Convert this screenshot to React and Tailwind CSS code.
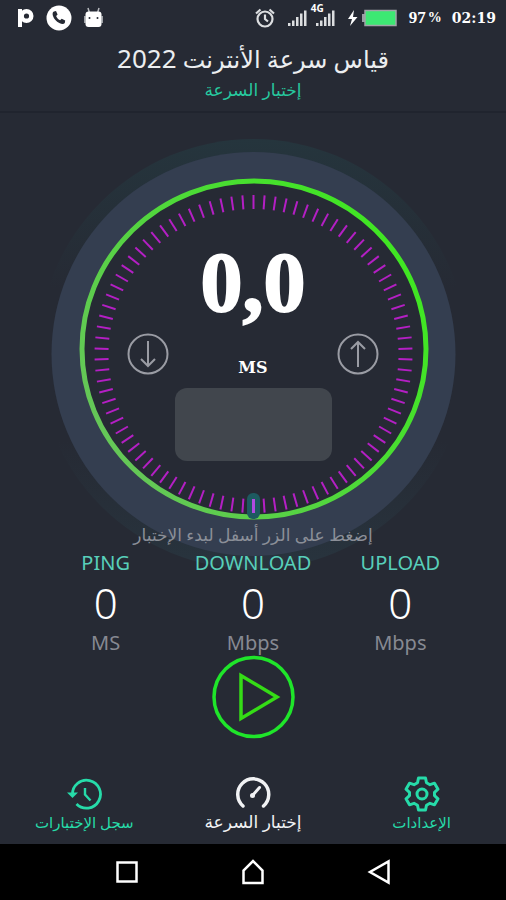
import React from "react";

const TICKS = Array.from({ length: 90 }, (_, i) => i * 4);

const STATS = [
  { label: "PING", value: "0", unit: "MS" },
  { label: "DOWNLOAD", value: "0", unit: "Mbps" },
  { label: "UPLOAD", value: "0", unit: "Mbps" },
];

function StatusBar() {
  return (
    <div className="flex h-9 items-center justify-between px-2.5 pl-4 text-white">
      <div className="flex items-center gap-3">
        <svg width="18" height="22" viewBox="0 0 18 22" aria-hidden="true">
          <path d="M2 2h4v18H2z" fill="white" />
          <circle cx="10.500" cy="9" r="4.800" fill="none" stroke="white" strokeWidth="4.400" />
        </svg>
        <svg width="26" height="26" viewBox="0 0 26 26" aria-hidden="true">
          <circle cx="13" cy="13" r="12.500" fill="white" />
          <path
            d="M8 6.500l2-.5 1.600 3.500-1.500 1.600c.8 2 2 3.300 4 4.200l1.600-1.500 3.500 1.700-.4 2.500c-1 1.300-3 1.300-5.500 0-3-1.500-5.300-4-6.300-7-.7-2.200-.4-4 1-4.500z"
            fill="#262a34"
          />
        </svg>
        <svg width="19" height="22" viewBox="0 0 19 22" aria-hidden="true">
          <path d="M4 1l1.500 5M15 1l-1.500 5" stroke="#b9bcc0" strokeWidth="1.500" />
          <rect x="1.500" y="4.500" width="16" height="15.500" rx="3" fill="white" />
          <path d="M1 9v7M18 9v7" stroke="#c8cacd" strokeWidth="1.500" />
          <circle cx="5.500" cy="11" r="1" fill="#262a34" />
          <circle cx="13.500" cy="11" r="1" fill="#262a34" />
        </svg>
      </div>
      <div className="flex items-center">
        <svg className="mr-3" width="20" height="20" viewBox="0 0 20 20" fill="none" stroke="#dcdee0" strokeWidth="2.200" aria-hidden="true">
          <circle cx="10" cy="11" r="7.500" />
          <path d="M10 6.500V11l3 2.500M1 5.500l4.500-4M19 5.500l-4.500-4" />
        </svg>
        <svg width="20" height="20" viewBox="0 0 20 20" fill="#dcdee0" aria-hidden="true">
          <path d="M1 15h2.500v3H1zM5 12.500h2.500V18H5zM9 9h2.500v9H9zM13 5.500h2.500V18H13zM17 2.500h2.500v15.500H17z" />
        </svg>
        <div className="relative ml-1.5 mr-3">
          <svg width="22" height="20" viewBox="0 0 22 20" fill="#dcdee0" aria-hidden="true">
            <path d="M3 15h2.500v3H3zM7 12.500h2.500V18H7zM11 9h2.500v9H11zM15 5.500h2.500V18H15zM19 2.500h2.500v15.500H19z" />
          </svg>
          <span className="absolute -left-0.5 -top-1.5 text-[10px] font-bold leading-3">4G</span>
        </div>
        <svg className="mr-3" width="50" height="20" viewBox="0 0 50 20" aria-hidden="true">
          <path d="M7 2L1 11h4l-2 7 7.500-9H6z" fill="white" />
          <path d="M15 6h3v8h-3z" fill="#9b9fa4" />
          <rect x="18" y="2.500" width="31" height="15" fill="#3de873" stroke="#a0a4a8" strokeWidth="1.500" />
        </svg>
        <span className="mr-2.5 flex gap-0.5 font-['Liberation_Serif',serif] text-[17px] font-bold">
          <span>97</span>
          <span className="text-[14px] leading-[26px]">%</span>
        </span>
        <span className="font-['DejaVu_Serif',serif] text-[14px] font-bold">02:19</span>
      </div>
    </div>
  );
}

function DialArt() {
  return (
    <svg
      className="absolute left-1/2 top-6 -translate-x-1/2"
      width="434"
      height="434"
      viewBox="0 0 434 434"
      fill="none"
      aria-hidden="true"
    >
      <defs>
        <linearGradient id="halo" x1="0" y1="0" x2="0" y2="1">
          <stop offset="0" stopColor="#25353d" />
          <stop offset="0.350" stopColor="#262a34" />
          <stop offset="0.700" stopColor="#262a34" />
          <stop offset="1" stopColor="#28343e" />
        </linearGradient>
        <linearGradient id="ring" x1="1" y1="0.200" x2="0" y2="0.800">
          <stop offset="0" stopColor="#3ee81f" />
          <stop offset="0.400" stopColor="#4bdc34" />
          <stop offset="1" stopColor="#68c45c" />
        </linearGradient>
      </defs>
      <circle cx="217" cy="217" r="215" fill="url(#halo)" />
      <circle cx="217.500" cy="217" r="202" fill="#343e50" />
      <ellipse cx="218" cy="212" rx="172" ry="168" fill="#262a34" stroke="url(#ring)" strokeWidth="5" />
      <rect x="211" y="356" width="13" height="26" rx="6" fill="#1d5a60" />
      <g stroke="#b41fc4" strokeWidth="2">
        {TICKS.map((angle) => (
          <path key={angle} d="M217.500 58v14" transform={`rotate(${angle} 217.500 217)`} />
        ))}
      </g>
      <path d="M217.500 362v14" stroke="#b04be0" strokeWidth="3" />
    </svg>
  );
}

function ArrowBadge({ up }) {
  return (
    <svg width="42" height="42" viewBox="0 0 42 42" fill="none" stroke="#9a9ca4" strokeWidth="2" aria-hidden="true">
      <circle cx="21" cy="21" r="19.500" />
      <path d={up ? "M21 34V9M14 16l7-7 7 7" : "M21 8v25M14 26l7 7 7-7"} />
    </svg>
  );
}

function Dial() {
  return (
    <div className="relative flex flex-col items-center">
      <p className="mt-[124px] font-['Liberation_Serif',serif] text-[84px] font-bold leading-[92px] text-white [-webkit-text-stroke:2px_white]">
        0,0
      </p>
      <div className="mt-1 flex w-[252px] items-start justify-between">
        <ArrowBadge />
        <span className="mt-[23px] font-['DejaVu_Serif',serif] text-[16px] font-bold leading-6 text-white">MS</span>
        <ArrowBadge up />
      </div>
      <div className="mt-2 h-[73px] w-[157px] rounded-xl bg-[#41464d]" />
      <p dir="rtl" className="mt-[60px] text-[17px] leading-7 text-[#8b8f98]">
        إضغط على الزر أسفل لبدء الإختبار
      </p>
    </div>
  );
}

function Stats() {
  return (
    <dl className="relative grid grid-cols-3 px-8 text-center">
      {STATS.map((s) => (
        <div key={s.label} className="flex flex-col items-center">
          <dt className="text-[20px] leading-7 text-[#58cfba]">{s.label}</dt>
          <dd className="text-[42px] font-light leading-[52px] text-white">{s.value}</dd>
          <dd className="text-[20px] leading-7 text-[#868992]">{s.unit}</dd>
        </div>
      ))}
    </dl>
  );
}

function HistoryIcon() {
  return (
    <svg width="36" height="36" viewBox="0 0 36 36" fill="none" stroke="currentColor" strokeWidth="2.800" aria-hidden="true">
      <path d="M6.500 19A14 14 0 1 1 10.500 28" />
      <path d="M1 16.500h11L6.500 22z" fill="currentColor" stroke="none" />
      <path d="M19 12v6.500l5.500 6" strokeWidth="2.400" />
    </svg>
  );
}

function GaugeIcon() {
  return (
    <svg width="36" height="36" viewBox="0 0 36 36" fill="none" stroke="currentColor" strokeWidth="3.500" strokeLinecap="round" aria-hidden="true">
      <path d="M8 30A15.500 15.500 0 1 1 28.500 30" />
      <path d="M17.500 19.500l7-8" strokeWidth="3" />
      <circle cx="17.500" cy="19.500" r="2.500" fill="currentColor" stroke="none" />
    </svg>
  );
}

function GearIcon() {
  return (
    <svg width="36" height="36" viewBox="0 0 36 36" fill="none" stroke="currentColor" strokeWidth="3" strokeLinejoin="round" aria-hidden="true">
      <path d="M14.500 2h7l1 4.700 3.500 2 4.500-1.500 3.500 6-3.500 3.200v3.200l3.500 3.200-3.500 6-4.500-1.500-3.500 2-1 4.700h-7l-1-4.700-3.500-2-4.500 1.500-3.500-6 3.500-3.200v-3.200L2 13.200l3.500-6L10 8.700l3.500-2z" />
      <circle cx="18" cy="18" r="5" />
    </svg>
  );
}

function Tab({ icon, label, active }) {
  return (
    <button
      type="button"
      className={
        active
          ? "flex flex-1 flex-col items-center text-[17px] leading-5 text-[#f1f2f4]"
          : "flex flex-1 flex-col items-center text-[15px] leading-5 text-[#26dba9]"
      }
    >
      {icon}
      <span dir="rtl">{label}</span>
    </button>
  );
}

export default function App() {
  return (
    <div className="flex min-h-screen flex-col bg-[#262a34] font-['Noto_Sans','DejaVu_Sans',sans-serif]">
      <header className="border-b-2 border-[#20242e] pb-2">
        <StatusBar />
        <h1 dir="rtl" className="mt-1 text-center text-[24px] leading-[37px] text-[#eceef0]">
          قياس سرعة الأنترنت <span className="text-[26px]">2022</span>
        </h1>
        <p dir="rtl" className="text-center text-[17px] leading-[26px] text-[#26c99f]">إختبار السرعة</p>
      </header>

      <main className="relative flex flex-1 flex-col">
        <DialArt />
        <Dial />
        <Stats />
        <button type="button" aria-label="بدء الإختبار" className="relative -mt-0.5 self-center">
          <svg width="84" height="84" viewBox="0 0 84 84" fill="none" stroke="#1fe52a" strokeWidth="3.500" aria-hidden="true">
            <circle cx="42.500" cy="42" r="39.500" />
            <path d="M30 20.500v43l36-21.500z" stroke="#35dc16" />
          </svg>
        </button>
      </main>

      <nav className="flex pb-3">
        <Tab icon={<HistoryIcon />} label="سجل الإختبارات" />
        <Tab icon={<GaugeIcon />} label="إختبار السرعة" active />
        <Tab icon={<GearIcon />} label="الإعدادات" />
      </nav>

      <div className="flex h-14 items-center justify-center gap-[102px] bg-black">
        <button type="button" aria-label="Recent apps">
          <svg width="24" height="24" viewBox="0 0 24 24" fill="none" stroke="white" strokeWidth="2.500" aria-hidden="true">
            <rect x="2.500" y="2.500" width="19" height="19" />
          </svg>
        </button>
        <button type="button" aria-label="Home">
          <svg width="24" height="26" viewBox="0 0 24 26" fill="none" stroke="white" strokeWidth="2.500" aria-hidden="true">
            <path d="M2.500 24V11.500L12 2l9.500 9.500V24z" />
          </svg>
        </button>
        <button type="button" aria-label="Back">
          <svg width="24" height="26" viewBox="0 0 24 26" fill="none" stroke="white" strokeWidth="2.500" aria-hidden="true">
            <path d="M21.500 2.500v21L3 13z" />
          </svg>
        </button>
      </div>
    </div>
  );
}
